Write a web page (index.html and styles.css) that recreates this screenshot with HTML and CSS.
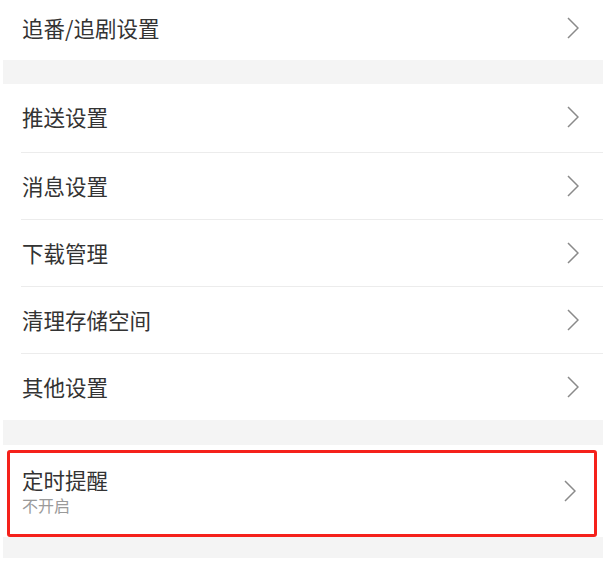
FILE: index.html
```html
<!DOCTYPE html>
<html lang="zh">
<head>
<meta charset="utf-8">
<link rel="stylesheet" href="styles.css">
</head>
<body>
<div class="page">
  <div class="group">
    <div class="item item-top">
      <span class="label">追番/追剧设置</span>
      <svg class="chev" viewBox="0 0 12 22"><polyline points="1,1 11,11 1,21"/></svg>
    </div>
  </div>
  <div class="gap"></div>
  <div class="group">
    <div class="item first">
      <span class="label">推送设置</span>
      <svg class="chev" viewBox="0 0 12 22"><polyline points="1,1 11,11 1,21"/></svg>
    </div>
    <div class="item">
      <span class="label">消息设置</span>
      <svg class="chev" viewBox="0 0 12 22"><polyline points="1,1 11,11 1,21"/></svg>
    </div>
    <div class="item">
      <span class="label">下载管理</span>
      <svg class="chev" viewBox="0 0 12 22"><polyline points="1,1 11,11 1,21"/></svg>
    </div>
    <div class="item">
      <span class="label">清理存储空间</span>
      <svg class="chev" viewBox="0 0 12 22"><polyline points="1,1 11,11 1,21"/></svg>
    </div>
    <div class="item last">
      <span class="label">其他设置</span>
      <svg class="chev" viewBox="0 0 12 22"><polyline points="1,1 11,11 1,21"/></svg>
    </div>
  </div>
  <div class="gap gap-2"></div>
  <div class="group group-mark">
    <div class="mark">
      <div class="texts">
        <span class="label">定时提醒</span>
        <span class="sub">不开启</span>
      </div>
      <svg class="chev" viewBox="0 0 12 22"><polyline points="1,1 11,11 1,21"/></svg>
    </div>
  </div>
  <div class="gap gap-3"></div>
</div>
</body>
</html>
```

FILE: styles.css
```css
html, body {
  margin: 0;
  padding: 0;
  background: #ffffff;
}
body {
  width: 603px;
  height: 565px;
  overflow: hidden;
  font-family: "Noto Sans CJK SC", "Noto Sans", sans-serif;
  color: #333333;
}
.page {
  margin-left: 3px;
  display: flex;
  flex-direction: column;
}
.group {
  background: #ffffff;
}
.gap {
  height: 24px;
  background: #f4f4f4;
}
.gap-2 {
  height: 25px;
}
.gap-3 {
  height: 21px;
}
.item {
  height: 67px;
  box-sizing: border-box;
  margin-left: 18px;
  padding-left: 1px;
  padding-right: 24px;
  border-bottom: 1px solid #ececec;
  display: flex;
  align-items: center;
  justify-content: space-between;
}
.item.first {
  height: 69px;
  padding-bottom: 2px;
}
.item.last {
  height: 66px;
  border-bottom: none;
}
.item-top {
  height: 60px;
  padding-bottom: 4px;
  border-bottom: none;
}
.label {
  font-size: 21.5px;
  line-height: 26px;
  color: #333333;
}
.chev {
  width: 12px;
  height: 22px;
  flex: none;
}
.chev polyline {
  fill: none;
  stroke: #8a8a8a;
  stroke-width: 1.5;
}
.group-mark {
  height: 92px;
  padding: 5px 6px 0 4px;
  box-sizing: border-box;
}
.mark {
  height: 87px;
  box-sizing: border-box;
  border: 3px solid #f5211b;
  border-radius: 3px;
  padding: 14px 18px 0 12px;
  display: flex;
  align-items: flex-start;
  justify-content: space-between;
}
.texts {
  display: flex;
  flex-direction: column;
}
.sub {
  margin-top: 2px;
  font-size: 16px;
  line-height: 20px;
  color: #9a9a9a;
}
.mark .chev {
  margin-top: 13px;
}
```
